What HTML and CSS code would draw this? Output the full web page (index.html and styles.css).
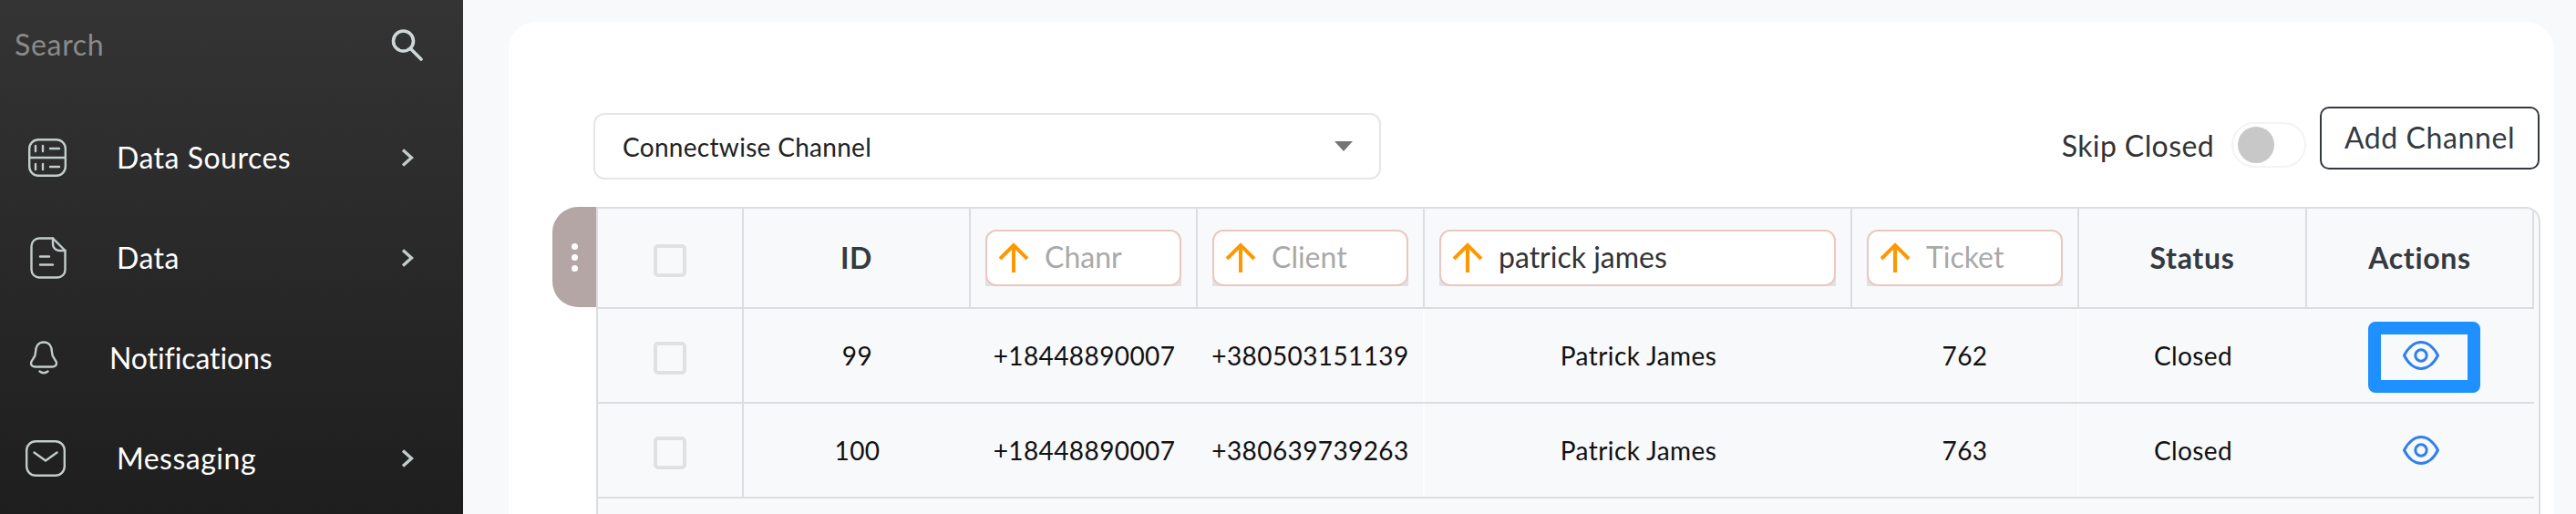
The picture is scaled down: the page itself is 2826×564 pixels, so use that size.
FILE: index.html
```html
<!DOCTYPE html>
<html lang="en">
<head>
<meta charset="utf-8">
<title>Channels</title>
<link rel="stylesheet" href="styles.css">
</head>
<body>
<div class="app">
  <aside class="sidebar">
    <div class="search">
      <span class="search-label">Search</span>
      <svg class="search-icon" width="36" height="36" viewBox="0 0 36 36" fill="none" stroke="#cfd8d8" stroke-width="3.6"><circle cx="13.5" cy="14" r="11"/><path d="M22 23 L33 34" stroke-linecap="round"/></svg>
    </div>
    <nav class="nav">
      <a class="nav-row">
        <span class="nav-slot slot-sources">
          <svg width="42" height="42" viewBox="0 0 42 42" fill="none" stroke="#c3cccc" stroke-width="2.4" stroke-linecap="round"><rect x="1.2" y="1.2" width="39.6" height="39.6" rx="10"/><path d="M1.2 21H40.8M8 8V14M16 8V14M24 11H34M8 28V34M16 28V34M24 31H34"/></svg>
        </span>
        <span class="nav-label">Data Sources</span>
        <svg class="chev" width="14" height="20" viewBox="0 0 14 20" fill="none" stroke="#c3cccc" stroke-width="3.4"><path d="M2 1.5 L11.5 10 L2 18.5"/></svg>
      </a>
      <a class="nav-row">
        <span class="nav-slot slot-data">
          <svg width="40" height="46" viewBox="0 0 40 46" fill="none" stroke="#c3cccc" stroke-width="2.4" stroke-linecap="round" stroke-linejoin="round"><path d="M25 1.5H10A8.5 8.5 0 0 0 1.500 10V36A8.500 8.500 0 0 0 10 44.500H30A8.500 8.500 0 0 0 38.500 36V15Z"/><path d="M25 1.500V8A7 7 0 0 0 32 15H38.500"/><path d="M11 21.500H21M11 30.500H25"/></svg>
        </span>
        <span class="nav-label">Data</span>
        <svg class="chev" width="14" height="20" viewBox="0 0 14 20" fill="none" stroke="#c3cccc" stroke-width="3.4"><path d="M2 1.5 L11.5 10 L2 18.5"/></svg>
      </a>
      <a class="nav-row">
        <span class="nav-slot slot-bell">
          <svg width="32" height="38" viewBox="0 0 32 38" fill="none" stroke="#c3cccc" stroke-width="2.4" stroke-linecap="round" stroke-linejoin="round"><path d="M16 1.500C9.500 1.500 7 7 7 12.500C7 20 2 20 2 24.500C2 27 4 28.500 6.500 28.500H25.500C28 28.500 30 27 30 24.500C30 20 25 20 25 12.500C25 7 22.500 1.500 16 1.500Z"/><path d="M11.500 33.500Q16 37 20.500 33.500"/></svg>
        </span>
        <span class="nav-label tight">Notifications</span>
      </a>
      <a class="nav-row">
        <span class="nav-slot slot-mail">
          <svg width="44" height="40" viewBox="0 0 44 40" fill="none" stroke="#c3cccc" stroke-width="2.4" stroke-linecap="round" stroke-linejoin="round"><rect x="1.200" y="1.200" width="41.600" height="37.600" rx="10"/><path d="M9.500 13.500L22 22.500L34.500 13.500"/></svg>
        </span>
        <span class="nav-label">Messaging</span>
        <svg class="chev" width="14" height="20" viewBox="0 0 14 20" fill="none" stroke="#c3cccc" stroke-width="3.4"><path d="M2 1.5 L11.5 10 L2 18.5"/></svg>
      </a>
    </nav>
  </aside>

  <main class="main">
    <section class="card">
      <div class="toolbar">
        <div class="select">
          <span>Connectwise Channel</span>
          <span class="caret"></span>
        </div>
        <div class="toolbar-right">
          <div class="skip">
            <span class="skip-label">Skip Closed</span>
            <span class="toggle"><span class="knob"></span></span>
          </div>
          <button class="add-btn" type="button">Add Channel</button>
        </div>
      </div>

      <div class="table-wrap">
        <div class="handle"><i></i><i></i><i></i></div>
        <div class="table">
          <div class="row head">
            <div class="cell"><span class="check"></span></div>
            <div class="cell title">ID</div>
            <div class="cell"><div class="filter"><div class="filter-box w-s"><svg class="arrow" width="34" height="34" viewBox="0 0 34 34" fill="none" stroke="#ff9800" stroke-width="4"><path d="M17 33V3M2 18L17 3L32 18"/></svg><span class="ph">Chanr</span></div></div></div>
            <div class="cell"><div class="filter"><div class="filter-box w-s"><svg class="arrow" width="34" height="34" viewBox="0 0 34 34" fill="none" stroke="#ff9800" stroke-width="4"><path d="M17 33V3M2 18L17 3L32 18"/></svg><span class="ph">Client</span></div></div></div>
            <div class="cell"><div class="filter"><div class="filter-box w-l"><svg class="arrow" width="34" height="34" viewBox="0 0 34 34" fill="none" stroke="#ff9800" stroke-width="4"><path d="M17 33V3M2 18L17 3L32 18"/></svg><span class="val">patrick james</span></div></div></div>
            <div class="cell"><div class="filter"><div class="filter-box w-s"><svg class="arrow" width="34" height="34" viewBox="0 0 34 34" fill="none" stroke="#ff9800" stroke-width="4"><path d="M17 33V3M2 18L17 3L32 18"/></svg><span class="ph">Ticket</span></div></div></div>
            <div class="cell title">Status</div>
            <div class="cell title">Actions</div>
          </div>

          <div class="row body">
            <div class="cell divided"><span class="check"></span></div>
            <div class="cell">99</div>
            <div class="cell">+18448890007</div>
            <div class="cell faint">+380503151139</div>
            <div class="cell">Patrick James</div>
            <div class="cell faint">762</div>
            <div class="cell">Closed</div>
            <div class="cell">
              <button class="eye-btn focused" type="button"><svg width="40" height="32" viewBox="0 0 40 32" fill="none" stroke="#2f80ed" stroke-width="3"><path d="M1.500 16C6 7 13 1.500 20 1.500C27 1.500 34 7 38.500 16C34 25 27 30.500 20 30.500C13 30.500 6 25 1.500 16Z"/><circle cx="20" cy="16" r="6.200"/></svg></button>
            </div>
          </div>

          <div class="row body">
            <div class="cell divided"><span class="check"></span></div>
            <div class="cell">100</div>
            <div class="cell">+18448890007</div>
            <div class="cell faint">+380639739263</div>
            <div class="cell">Patrick James</div>
            <div class="cell faint">763</div>
            <div class="cell">Closed</div>
            <div class="cell">
              <button class="eye-btn" type="button"><svg width="40" height="32" viewBox="0 0 40 32" fill="none" stroke="#2f80ed" stroke-width="3"><path d="M1.500 16C6 7 13 1.500 20 1.500C27 1.500 34 7 38.500 16C34 25 27 30.500 20 30.500C13 30.500 6 25 1.500 16Z"/><circle cx="20" cy="16" r="6.200"/></svg></button>
            </div>
          </div>
        </div>
      </div>
    </section>
  </main>
</div>
</body>
</html>
```

FILE: styles.css
```css
* { box-sizing: border-box; }
html, body { margin: 0; height: 100%; overflow: hidden; }
body {
  font-family: "Lato", "Noto Sans", "Liberation Sans", sans-serif;
  background: #f8f9fb;
  color: #111;
}
.app { display: flex; height: 564px; }

/* Sidebar */
.sidebar {
  flex: 0 0 508px;
  background: linear-gradient(180deg, #343434 0%, #1e1e1e 100%);
  color: #fff;
  padding-right: 43px;
}
.search {
  height: 118px;
  padding: 30px 0 0 16px;
  display: flex;
  align-items: flex-start;
  justify-content: space-between;
}
.search-label { font-size: 32px; line-height: 37px; color: #8a8a8a; letter-spacing: 0.7px; }
.search-icon { margin-top: 1px; }
.nav-row {
  height: 110px;
  display: flex;
  align-items: center;
  padding-right: 11px;
}
.nav-slot { flex: none; display: flex; align-items: center; width: 128px; }
.slot-sources { padding-left: 31px; }
.slot-data { padding-left: 33px; }
.slot-bell { padding-left: 32px; width: 120px; }
.slot-mail { padding-left: 28px; }
.nav-label { font-size: 32px; line-height: 40px; color: #fff; letter-spacing: 0.5px; }
.tight { letter-spacing: -0.1px; }
.chev { margin-left: auto; }

/* Main */
.main { flex: 1; min-width: 0; padding: 24px 24px 0 50px; }
.card {
  height: 100%;
  background: #fff;
  border-radius: 30px 30px 0 0;
  padding: 93px 16px 0 93px;
}
.toolbar {
  display: flex;
  justify-content: space-between;
  align-items: flex-start;
  height: 80px;
  margin-bottom: 30px;
}
.select {
  width: 864px;
  height: 73px;
  margin-top: 7px;
  padding: 0 29px 0 30px;
  border: 2px solid #e6e6e6;
  border-radius: 12px;
  display: flex;
  align-items: center;
  justify-content: space-between;
  font-size: 28px;
  color: #222;
  letter-spacing: 0.3px;
}
.caret {
  width: 0;
  height: 0;
  border-left: 10px solid transparent;
  border-right: 10px solid transparent;
  border-top: 11px solid #757575;
}
.toolbar-right { display: flex; align-items: flex-start; gap: 15px; }
.skip { display: flex; align-items: center; gap: 19px; height: 50px; margin-top: 17px; }
.skip-label { font-size: 32px; color: #333; letter-spacing: 0.4px; }
.toggle {
  width: 82px;
  height: 50px;
  border: 2px solid #f3f3f3;
  border-radius: 25px;
  background: #fff;
  display: flex;
  align-items: center;
  padding-left: 5px;
}
.knob { width: 40px; height: 40px; border-radius: 50%; background: #c8c8c8; }
.add-btn {
  width: 241px;
  height: 69px;
  border: 2px solid #343a40;
  border-radius: 10px;
  background: #fff;
  font: inherit;
  font-size: 32px;
  letter-spacing: 0.6px;
  color: #343a40;
  padding: 0 0 2px;
}

/* Table */
.table-wrap { position: relative; margin-left: 3px; height: 337px; }
.handle {
  position: absolute;
  left: -48px;
  top: 0;
  width: 48px;
  height: 110px;
  background: #b3a6a5;
  border-radius: 28px 0 0 28px;
  display: flex;
  flex-direction: column;
  align-items: center;
  justify-content: center;
  gap: 5px;
}
.handle i { width: 7px; height: 7px; border-radius: 50%; background: #fff; }
.table {
  height: 100%;
  width: 2133px;
  background: #f8f9fb;
  border: 2px solid #dcdde0;
  border-bottom: 0;
  border-radius: 0 16px 0 0;
  overflow: hidden;
}
.row {
  display: grid;
  grid-template-columns: 160px 249px 249px 249px 469px 249px 250px 249px;
  width: 2124px;
  border-bottom: 2px solid #dcdde0;
}
.head { height: 110px; }
.body { height: 104px; }
.cell {
  display: flex;
  align-items: center;
  justify-content: center;
  font-size: 28px;
  letter-spacing: 0.4px;
  color: #111;
  white-space: nowrap;
  min-width: 0;
}
.head .cell { border-right: 2px solid #dcdde0; }
.divided { border-right: 2px solid #dcdde0; }
.faint { border-right: 2px solid #fdfdfe; }
.title { font-size: 32px; font-weight: 700; color: #343a40; letter-spacing: 0.7px; padding-bottom: 2px; }
.check {
  width: 36px;
  height: 36px;
  margin-top: 6px;
  border: 4px solid #e1e1e1;
  border-radius: 5px;
}
.filter {
  height: 62px;
  background: linear-gradient(180deg, transparent 60%, #e2e2e4 60%);
}
.filter-box {
  height: 62px;
  background: #fff;
  border: 2px solid #eac7c0;
  border-radius: 12px;
  display: flex;
  align-items: center;
  padding-left: 12px;
  overflow: hidden;
}
.w-s { width: 215px; }
.w-l { width: 435px; }
.arrow { flex: none; margin-right: 17px; }
.ph, .val { font-size: 32px; letter-spacing: 0; padding-bottom: 3px; }
.ph { color: #a9a9a9; }
.val { color: #333; }
.eye-btn {
  border: 0;
  background: none;
  padding: 0;
  display: flex;
  align-items: center;
  justify-content: center;
  margin-top: -1px;
}
.focused {
  width: 123px;
  height: 78px;
  border: 14px solid #1e90ff;
  border-radius: 8px;
  margin: 3px 0 0 7px;
  padding: 0 7px 4px 0;
}
```
